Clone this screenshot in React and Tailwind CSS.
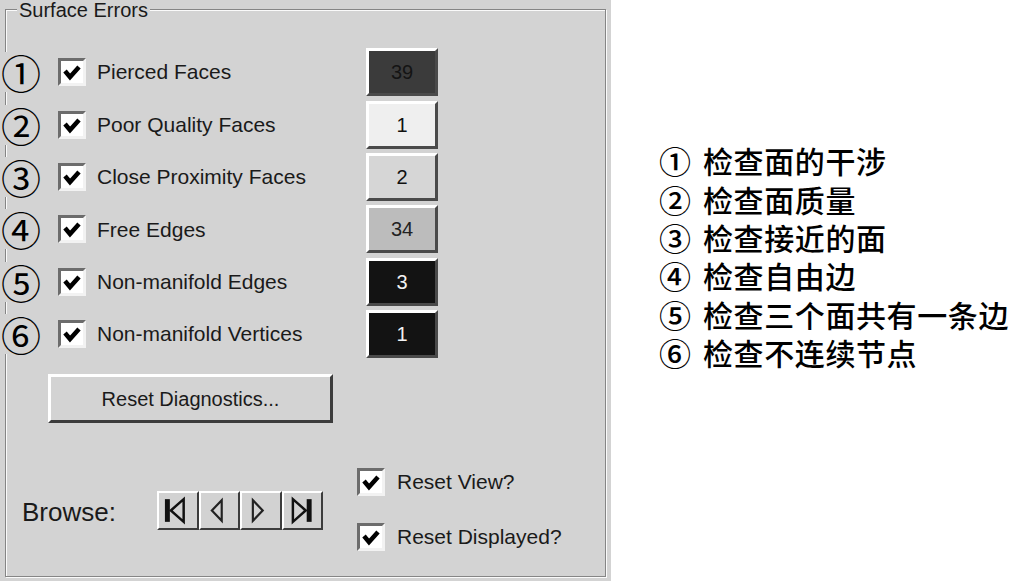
import React from 'react';

const ui = { fontFamily: '"Liberation Sans", Arial, sans-serif' };
const cjk = { fontFamily: '"Noto Sans CJK SC", "Noto Sans", sans-serif' };

const rows = [
  { n: '①', label: 'Pierced Faces', value: '39', box: 'bg-[#3b3b3b] text-[#141414]' },
  { n: '②', label: 'Poor Quality Faces', value: '1', box: 'bg-[#efefef] text-[#111]' },
  { n: '③', label: 'Close Proximity Faces', value: '2', box: 'bg-[#d6d6d6] text-[#111]' },
  { n: '④', label: 'Free Edges', value: '34', box: 'bg-[#bcbcbc] text-[#222]' },
  { n: '⑤', label: 'Non-manifold Edges', value: '3', box: 'bg-[#131313] text-[#f2f2f2]' },
  { n: '⑥', label: 'Non-manifold Vertices', value: '1', box: 'bg-[#131313] text-[#f2f2f2]' },
];

const notes = [
  ['①', '检查面的干涉'],
  ['②', '检查面质量'],
  ['③', '检查接近的面'],
  ['④', '检查自由边'],
  ['⑤', '检查三个面共有一条边'],
  ['⑥', '检查不连续节点'],
];

function Check() {
  return (
    <span className="flex h-[28px] w-[28px] shrink-0 items-center justify-center border-[3px] border-t-[#6c6c6c] border-l-[#6c6c6c] border-b-[#f2f2f2] border-r-[#f2f2f2] bg-white">
      <svg width="20" height="18" viewBox="0 0 20 18">
        <path d="M3 8 L8 14 L17 4" fill="none" stroke="#000" strokeWidth="4.5" strokeLinejoin="miter" />
      </svg>
    </span>
  );
}

function NavButton({ children }) {
  return (
    <span className="flex h-[39px] w-[41.5px] items-center justify-center border-2 border-t-white border-l-white border-b-[#3c3c3c] border-r-[#3c3c3c] bg-[#d2d2d2]">
      <svg width="38" height="35" viewBox="0 0 38 35">{children}</svg>
    </span>
  );
}

export default function App() {
  return (
    <div className="flex h-[581px] w-[1016px] bg-white text-black" style={ui}>
      <div className="h-[581px] w-[611px] shrink-0 bg-[#d3d3d3] pt-[9px] pl-[5px] pr-[5px] pb-[4px]">
        <div className="relative h-full border border-[#858585] shadow-[inset_1px_1px_0_#fafafa,1px_1px_0_#fafafa]">
          <span className="absolute -top-[11px] left-[11px] bg-[#d3d3d3] px-[2px] text-[20px] leading-[22px] text-[#1a1a1a]">
            Surface Errors
          </span>

          <div className="-ml-[6px] pt-[36px]">
            {rows.map((r) => (
              <div key={r.n} className="flex h-[52.4px] items-center">
                <span className="relative flex w-[42px] justify-center bg-[#d3d3d3] text-[40px] leading-none" style={cjk}>
                  {r.n}
                </span>
                <span className="ml-[16px]">
                  <Check />
                </span>
                <span className="ml-[11px] w-[269px] text-[21px] text-[#1a1a1a]">{r.label}</span>
                <span
                  className={`flex h-[48px] w-[72px] items-center justify-center border-[3px] border-t-white border-l-white border-b-[#4a4a4a] border-r-[#4a4a4a] text-[20px] ${r.box}`}
                >
                  {r.value}
                </span>
              </div>
            ))}
          </div>

          <div className="ml-[42px] mt-[14px] flex h-[49px] w-[285px] items-center justify-center border-[3px] border-t-white border-l-white border-b-[#3c3c3c] border-r-[#3c3c3c] bg-[#d3d3d3] text-[20px] text-[#1a1a1a]">
            Reset Diagnostics...
          </div>

          <div className="mt-[46px] flex h-[80px] items-center">
            <span className="ml-[16px] mt-[6px] w-[135px] text-[26px] text-[#1a1a1a]">Browse:</span>
            <div className="mt-[3px] flex">
              <NavButton>
                <rect x="6" y="6" width="5" height="23" fill="#111" />
                <path d="M12 17.5 L25 6 L25 29 Z" fill="none" stroke="#111" strokeWidth="2.5" />
              </NavButton>
              <NavButton>
                <path d="M11 17.5 L21 7 L21 28 Z" fill="none" stroke="#222" strokeWidth="2.2" />
              </NavButton>
              <NavButton>
                <path d="M21 17.5 L11 7 L11 28 Z" fill="none" stroke="#222" strokeWidth="2.2" />
              </NavButton>
              <NavButton>
                <path d="M22 17.5 L9 6 L9 29 Z" fill="none" stroke="#111" strokeWidth="2.5" />
                <rect x="23" y="6" width="5" height="23" fill="#111" />
              </NavButton>
            </div>
            <div className="ml-[34px] flex flex-col gap-[24px]">
              <div className="flex items-center gap-[12px]">
                <Check />
                <span className="text-[21px] text-[#1a1a1a]">Reset View?</span>
              </div>
              <div className="flex items-center gap-[12px]">
                <Check />
                <span className="text-[21px] text-[#1a1a1a]">Reset Displayed?</span>
              </div>
            </div>
          </div>
        </div>
      </div>

      <div className="flex-1 pl-[48px] pt-[141px]" style={cjk}>
        {notes.map(([n, t]) => (
          <div key={n} className="flex h-[38.4px] items-center whitespace-nowrap text-[30px] font-medium leading-[38px] text-black">
            <span className="w-[44px] shrink-0 text-[32px] leading-[38px]">{n}</span>
            <span className="tracking-[0.6px]">{t}</span>
          </div>
        ))}
      </div>
    </div>
  );
}
